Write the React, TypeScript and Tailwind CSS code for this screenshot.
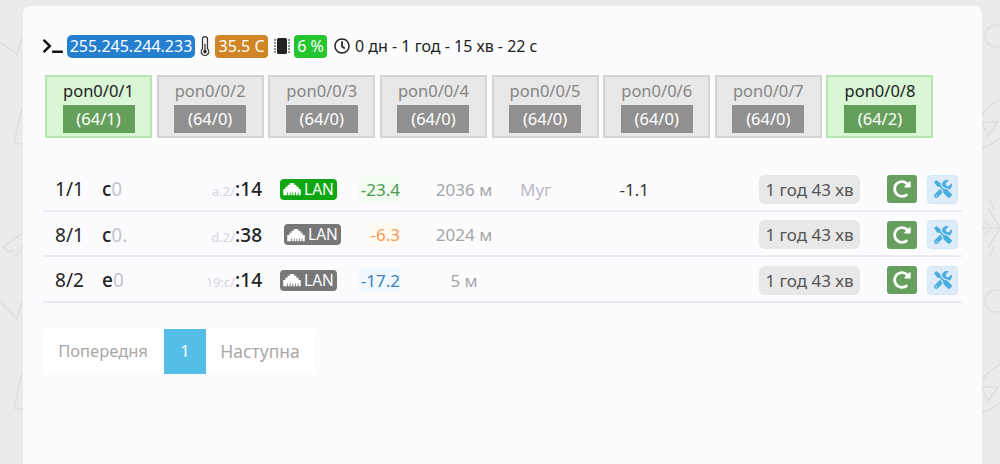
import { BsThermometerHalf } from "react-icons/bs";
import { FaRedoAlt, FaRegClock, FaTerminal, FaTools } from "react-icons/fa";

type Port = { name: string; count: string; active: boolean };
type Onu = {
    port: string;
    head: string;
    faded: string;
    fragment: string;
    tail: string;
    macWidth: string;
    lanClass: string;
    signal: string;
    signalClass: string;
    signalBox: string;
    signalWidth: string;
    distance: string;
    description?: boolean;
};

const ports: Port[] = [
    { name: "pon0/0/1", count: "(64/1)", active: true },
    { name: "pon0/0/2", count: "(64/0)", active: false },
    { name: "pon0/0/3", count: "(64/0)", active: false },
    { name: "pon0/0/4", count: "(64/0)", active: false },
    { name: "pon0/0/5", count: "(64/0)", active: false },
    { name: "pon0/0/6", count: "(64/0)", active: false },
    { name: "pon0/0/7", count: "(64/0)", active: false },
    { name: "pon0/0/8", count: "(64/2)", active: true },
];

const onus: Onu[] = [
    {
        port: "1/1",
        head: "c",
        faded: "0",
        fragment: "a.2/",
        tail: ":14",
        macWidth: "w-[178px]",
        lanClass: "bg-[#0fa711]",
        signal: "-23.4",
        signalClass: "text-[#4c9a52] bg-[#f3fcf1]",
        signalBox: "w-[41px]",
        signalWidth: "w-[63px]",
        distance: "2036 м",
        description: true,
    },
    {
        port: "8/1",
        head: "c",
        faded: "0.",
        fragment: "d.2/",
        tail: ":38",
        macWidth: "w-[182px]",
        lanClass: "bg-[#777777]",
        signal: "-6.3",
        signalClass: "text-[#f79a55] bg-[#fffaf2]",
        signalBox: "w-[32px]",
        signalWidth: "w-[59px]",
        distance: "2024 м",
    },
    {
        port: "8/2",
        head: "e",
        faded: "0",
        fragment: "19:c/",
        tail: ":14",
        macWidth: "w-[178px]",
        lanClass: "bg-[#777777]",
        signal: "-17.2",
        signalClass: "text-[#3f83b8] bg-[#f1f8fe]",
        signalBox: "w-[41px]",
        signalWidth: "w-[63px]",
        distance: "5 м",
    },
];

function LanIcon() {
    return (
        <svg viewBox="0 0 20 16" className="h-[14px] w-[18px]" fill="currentColor">
            <path d="M0 15V8h2.5V5.5H5V3h2.5V1h5v2H15v2.5h2.5V8H20v7h-2.5v-3h-1v3h-2v-3h-1v3h-2v-3h-1v3h-2v-3h-1v3h-2v-3h-1v3z" />
        </svg>
    );
}

function ChipIcon() {
    return (
        <svg viewBox="0 0 16 18" className="ml-[6px] h-[18px] w-[16px] text-[#222222]" fill="currentColor">
            <rect x="3" y="1" width="10" height="16" rx="1.5" />
            <path
                d="M0 3h2M0 6h2M0 9h2M0 12h2M0 15h2M14 3h2M14 6h2M14 9h2M14 12h2M14 15h2"
                stroke="currentColor"
                strokeWidth="1"
            />
        </svg>
    );
}

function Wallpaper() {
    return (
        <svg viewBox="0 0 1000 464" className="absolute inset-0 h-full w-full" fill="none" stroke="#dedede" strokeWidth="1.5">
            <path d="M0 42L17 54L22 37" />
            <path d="M22 108L14 143L23 144" />
            <path d="M23 233L3 247L8 252L12 250L14 256L20 252L23 245" />
            <path d="M0 302L17 319L22 302" />
            <path d="M22 373L14 408L23 409" />
            <circle cx="996" cy="36" r="11" />
            <path d="M982 115Q990 104 1000 100M982 122H998L988 136ZM982 148Q992 144 1000 138" />
            <path d="M982 228H1000M988 208L1000 228L988 248M985 222L992 228L985 234M990 200L994 210M990 256L994 246" />
            <circle cx="996" cy="301" r="11" />
            <path d="M982 380Q990 369 1000 365M982 387H998L988 401ZM982 413Q992 409 1000 403" />
        </svg>
    );
}

function PortTab({ port }: { port: Port }) {
    return (
        <div
            className={`flex h-[63px] w-[107px] flex-col items-center border-2 ${
                port.active
                    ? "border-[#b8e6b0] bg-[#d9f6d5] text-[#222222]"
                    : "border-[#d4d4d4] bg-[#e8e8e8] text-[#858585]"
            }`}
        >
            <span className="text-[16.5px] leading-[28px]">{port.name}</span>
            <span
                className={`flex h-[28px] w-[72px] items-center justify-center text-[16.5px] text-white ${
                    port.active ? "bg-[#659f5c]" : "bg-[#909090]"
                }`}
            >
                {port.count}
            </span>
        </div>
    );
}

function OnuRow({ onu }: { onu: Onu }) {
    return (
        <div className="flex h-[45.5px] items-center border-b-2 border-[#ececf0] pt-[3px] text-[19px]">
            <span className="w-[53px] text-center text-[#222222]">{onu.port}</span>
            <span className={`flex shrink-0 pl-[6px] ${onu.macWidth}`}>
                <span className="flex w-[160px] justify-between font-medium text-[#222222]">
                    <span>
                        {onu.head}
                        <span className="font-normal text-[#c4c4d0]">{onu.faded}</span>
                    </span>
                    <span>
                        <span className="text-[13px] font-normal text-[#d5d5e0]">{onu.fragment}</span>
                        {onu.tail}
                    </span>
                </span>
            </span>
            <span
                className={`ml-[6px] flex h-[21px] w-[57px] shrink-0 items-center justify-center gap-[3px] rounded-[4px] text-[15.5px] text-white ${onu.lanClass}`}
            >
                <LanIcon />
                LAN
            </span>
            <span className={`flex shrink-0 justify-end ${onu.signalWidth}`}>
                <span className={`text-right text-[17px] leading-[25px] ${onu.signalClass} ${onu.signalBox}`}>
                    {onu.signal}
                </span>
            </span>
            <span className="w-[120px] shrink-0 pl-[8px] text-center text-[17px] text-[#a5a5a5]">{onu.distance}</span>
            {onu.description ? (
                <span className="flex w-[129px] justify-between text-[17px] text-[#333333]">
                    <span className="text-[#b9b9c8]">Муг</span>
                    <span>-1.1</span>
                </span>
            ) : null}
            <span className="ml-auto mr-[27px] flex h-[29px] w-[101px] items-center justify-center rounded-[6px] bg-[#e8e8e8] text-[17px] text-[#555555]">
                1 год 43 хв
            </span>
            <span className="mr-[10px] flex h-[28px] w-[30px] items-center justify-center rounded-[3px] bg-[#67a05e] text-[18px] text-white">
                <FaRedoAlt />
            </span>
            <span className="mr-[4px] flex h-[29px] w-[31px] items-center justify-center rounded-[4px] border border-[#d2e6f6] bg-[#deecfa] text-[18px] text-[#4aaee0]">
                <FaTools />
            </span>
        </div>
    );
}

export default function App() {
    return (
        <div className="relative h-[464px] w-[1000px] overflow-hidden bg-[#ebebeb] font-['Noto_Sans','Open_Sans',sans-serif]">
            <Wallpaper />
            <div className="relative mx-[23px] mt-[6px] h-[458px] w-[959px] rounded-t-[8px] bg-[#fcfcff] px-[20px] pt-[25px]">
                <div className="flex h-[30px] items-center text-[16px] text-[#222222]">
                    <FaTerminal className="text-[20px] text-[#111111]" />
                    <span className="ml-[4px] flex h-[23px] w-[128px] items-center justify-center rounded-[5px] bg-[#2480cf] text-[16px] text-white">
                        255.245.244.233
                    </span>
                    <BsThermometerHalf className="text-[20px] text-[#333333]" />
                    <span className="flex h-[23px] w-[53px] items-center justify-center rounded-[4px] bg-[#d08526] text-[16px] text-white">
                        35.5 C
                    </span>
                    <ChipIcon />
                    <span className="ml-[4px] flex h-[23px] w-[33px] items-center justify-center rounded-[4px] bg-[#23c62f] text-[16px] text-white">
                        6 %
                    </span>
                    <FaRegClock className="ml-[7px] text-[16px] text-[#222222]" />
                    <span className="ml-[5px]">0 дн - 1 год - 15 хв - 22 с</span>
                </div>
                <div className="ml-[2px] mt-[14px] flex gap-[4.65px]">
                    {ports.map((port) => (
                        <PortTab key={port.name} port={port} />
                    ))}
                </div>
                <div className="mt-[28px] w-[919px]">
                    {onus.map((onu) => (
                        <OnuRow key={onu.port} onu={onu} />
                    ))}
                </div>
                <div className="-ml-[1px] mt-[26px] flex h-[45px] w-[272px] items-center bg-white text-[16.5px] text-[#a8a8a8]">
                    <span className="w-[122px] text-center">Попередня</span>
                    <span className="flex h-[45px] w-[42px] items-center justify-center bg-[#54bde8] text-white">1</span>
                    <span className="flex-1 text-center text-[17.5px]">Наступна</span>
                </div>
            </div>
        </div>
    );
}
